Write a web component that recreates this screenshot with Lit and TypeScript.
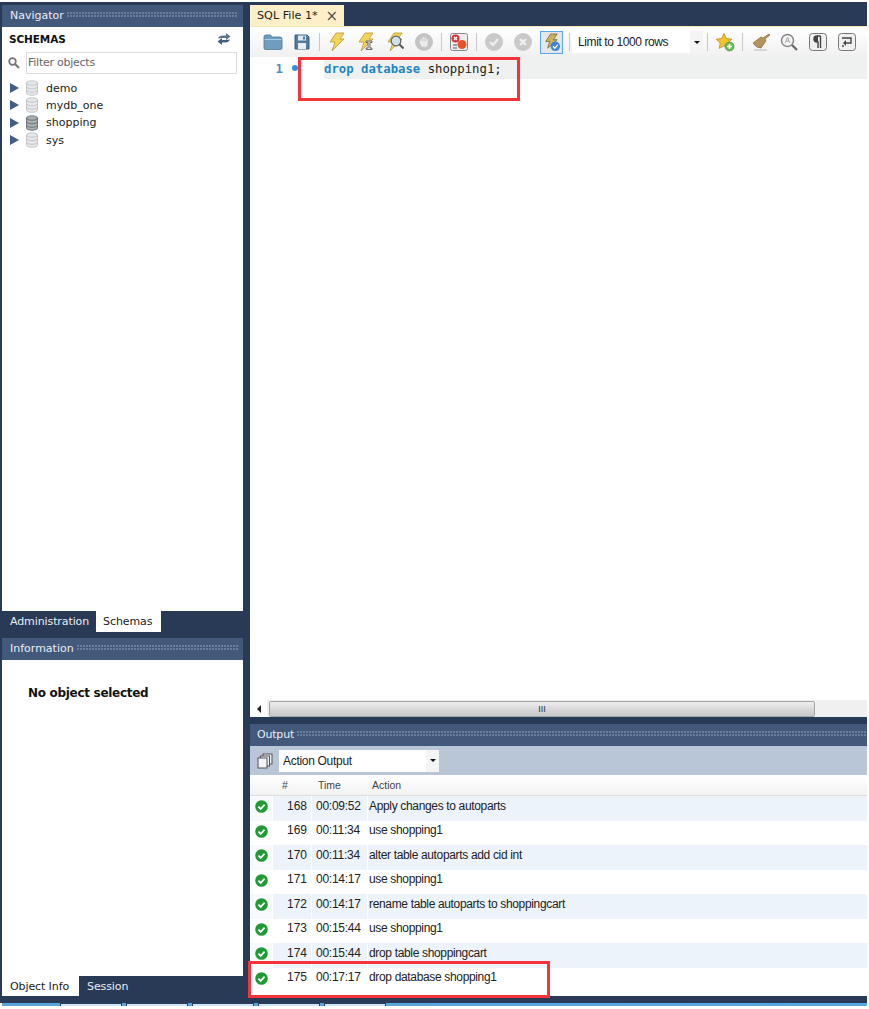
import { LitElement, html, css, svg } from "lit";
import { customElement } from "lit/decorators.js";

const rows = [
  ["168", "00:09:52", "Apply changes to autoparts"],
  ["169", "00:11:34", "use shopping1"],
  ["170", "00:11:34", "alter table autoparts add cid int"],
  ["171", "00:14:17", "use shopping1"],
  ["172", "00:14:17", "rename table autoparts to shoppingcart"],
  ["173", "00:15:44", "use shopping1"],
  ["174", "00:15:44", "drop table shoppingcart"],
  ["175", "00:17:17", "drop database shopping1"],
];
const schemas = [
  ["demo", false],
  ["mydb_one", false],
  ["shopping", true],
  ["sys", false],
] as [string, boolean][];

const icon = (body: unknown, cls = "ic") =>
  html`<svg class=${cls} viewBox="0 0 20 20" aria-hidden="true">${body}</svg>`;
const bolt = svg`<path d="M9 1h8l-4 6h4L5 19l3-9H3z" fill="#f3d35a" stroke="#b99a3a" stroke-width=".8"/>`;
const dbIcon = (dark: boolean) => {
  const f = dark ? "#a9aeb3" : "#e6e8e9";
  const s = dark ? "#5f666d" : "#b8bcbf";
  return html`<svg class="db" viewBox="0 0 14 16" aria-hidden="true">
    <path d="M1.5 3v10c0 1.3 2.5 2.3 5.5 2.3s5.500-1 5.500-2.300V3z" fill=${f} stroke=${s} stroke-width=".8"/>
    <ellipse cx="7" cy="3" rx="5.500" ry="2.200" fill=${f} stroke=${s} stroke-width=".8"/>
    <path d="M1.500 6.500c0 1.300 2.500 2.300 5.500 2.300s5.500-1 5.500-2.300M1.500 10c0 1.300 2.500 2.300 5.500 2.300s5.500-1 5.500-2.300" fill="none" stroke=${s} stroke-width=".8"/>
  </svg>`;
};

@customElement("app-root")
export class AppRoot extends LitElement {
  static styles = css`
    :host { display: block; width: 869px; height: 1009px; background: #fff; position: relative; overflow: hidden; font-family: "DejaVu Sans", sans-serif; color: #111; }
    .app { margin-top: 2px; width: 867px; height: 1001px; background: #283a56; display: grid; grid-template-columns: 241px 617px; column-gap: 7px; padding: 3px 0 0 2px; box-sizing: border-box; }
    .col { display: flex; flex-direction: column; min-height: 0; }
    .title { height: 22px; flex: none; display: flex; align-items: center; gap: 3px; padding: 0 5px 2px 8px; background: #43597c; color: #e8edf4; font-size: 11px; box-sizing: border-box; }
    .title.wide { padding-right: 0; padding-left: 7px; letter-spacing: -.2px; }
    .dots { flex: 1; height: 6px; background-image: radial-gradient(circle at 1px 1px, #6a7f9e 1px, transparent 1.200px); background-size: 3px 3px; }

    .nav { height: 584px; background: #fff; flex: none; display: flex; flex-direction: column; }
    .schemas { display: flex; justify-content: space-between; align-items: center; height: 25px; padding: 0 12px 2px 7px; box-sizing: border-box; font-size: 10.500px; font-weight: bold; color: #111; letter-spacing: -.1px; }
    .filter { display: flex; align-items: center; padding: 0 6px 0 5px; gap: 5px; height: 22px; }
    .filter-box { flex: 1; height: 22px; border: 1px solid #d9dde2; box-sizing: border-box; font-size: 11px; letter-spacing: -.25px; color: #666; display: flex; align-items: center; padding: 0 0 2px 1px; }
    .search { width: 14px; height: 14px; flex: none; }
    .tree { padding-top: 5.500px; display: flex; flex-direction: column; }
    .node { height: 17.300px; display: flex; align-items: center; font-size: 11px; color: #222; }
    .tri { width: 0; height: 0; margin-left: 8px; border-left: 9px solid #3f5f88; border-top: 5px solid transparent; border-bottom: 5px solid transparent; }
    .db { width: 14px; height: 16px; margin-left: 6px; margin-right: 7px; }

    .tabs { height: 21px; flex: none; display: flex; font-size: 11px; color: #e8edf4; }
    .tab { padding: 0 7px 0 8px; display: flex; align-items: center; box-sizing: border-box; height: 21px; letter-spacing: -.1px; }
    .tab.on { background: #fff; color: #222; padding: 0 9px 0 7px; }
    .tab.on.first { padding: 0 10px 0 8px; }
    .tabs.below { height: 20px; }
    .tabs.below .tab { height: 20px; }
    .gap6 { height: 6px; flex: none; }
    .info { height: 316px; flex: none; background: #fff; padding: 26px 0 0 26px; box-sizing: border-box; font-size: 12px; font-weight: bold; color: #111; letter-spacing: -.3px; }

    .doc-tabs { height: 21px; flex: none; display: flex; }
    .doc-tab { width: 94px; height: 21px; background: #fdf0c8; display: flex; align-items: center; justify-content: space-between; padding: 0 6px 0 7px; box-sizing: border-box; font-size: 11.200px; color: #222; }
    .close { font-size: 15px; color: #555; }
    .cream { height: 1px; background: #f4e6b8; flex: none; }
    .toolbar { height: 30px; flex: none; background: linear-gradient(#fff, #f0f0f0); display: flex; align-items: center; padding-left: 8px; box-sizing: border-box; }
    .cell { width: 29px; height: 22px; display: flex; align-items: center; justify-content: center; flex: none; }
    .cell.narrow { width: 26px; }
    .cell.m { width: 28px; }
    .ic { width: 20px; height: 20px; display: block; }
    .sep { width: 6px; height: 18px; flex: none; display: flex; justify-content: center; }
    .sep::after { content: ""; width: 1px; height: 18px; background: #c4c8cc; }
    .sep.w8 { width: 8px; }
    .sep.w9 { width: 9px; }
    .toggled { border: 1px solid #5aa6ee; background: #e4e6e8; width: 23px; height: 23px; box-sizing: border-box; display: flex; align-items: center; justify-content: center; }
    .toggled .ic { width: 19px; height: 19px; }
    .limit { width: 131px; height: 22px; background: #fff; flex: none; display: flex; justify-content: space-between; align-items: center; padding-left: 6px; box-sizing: border-box; font-family: "Liberation Sans", sans-serif; font-size: 12px; color: #222; letter-spacing: -.4px; }
    .drop { width: 13px; height: 22px; background: #f4f4f4; display: flex; align-items: center; justify-content: center; }
    .drop i { width: 0; height: 0; border-top: 3px solid #111; border-left: 3px solid transparent; border-right: 3px solid transparent; }

    .editor { height: 643px; flex: none; background: #fff; }
    .line { height: 22px; display: flex; align-items: center; font-family: "DejaVu Sans Mono", monospace; font-size: 12.300px; }
    .no { width: 33px; text-align: right; color: #4d8fc0; font-weight: bold; flex: none; padding-top: 1px; }
    .mark { width: 41px; flex: none; padding-left: 9px; box-sizing: border-box; display: flex; }
    .mark i { width: 6px; height: 6px; border-radius: 50%; background: #2f8fd8; }
    .code { flex: 1; height: 22px; padding-top: 1px; box-sizing: border-box; background: #eff0f0; display: flex; align-items: center; color: #222; white-space: pre; }
    .kw { color: #1d86c4; font-weight: bold; }

    .hscroll { height: 17px; flex: none; background: #f0f0f0; display: flex; align-items: center; }
    .sarrow { width: 17px; height: 17px; display: flex; align-items: center; justify-content: center; background: #fff; flex: none; }
    .sarrow i { border-right: 4px solid #222; border-top: 4px solid transparent; border-bottom: 4px solid transparent; }
    .thumb { margin-left: 2px; width: 546px; height: 16px; box-sizing: border-box; border: 1px solid #a5a5a5; border-radius: 2px; background: linear-gradient(#efefef, #d8d8d8 50%, #c8c8c8); display: flex; align-items: center; justify-content: center; font-size: 9px; color: #333; font-family: "Liberation Sans", sans-serif; }
    .gap8 { height: 7px; flex: none; }

    .outbar { height: 29px; flex: none; background: #b9c6d7; display: flex; align-items: center; padding-left: 7px; box-sizing: border-box; }
    .copy { width: 16px; height: 16px; flex: none; }
    .select { margin-left: 6px; width: 160px; height: 22px; background: #fff; display: flex; align-items: center; justify-content: space-between; padding-left: 4px; box-sizing: border-box; font-family: "Liberation Sans", sans-serif; font-size: 12px; letter-spacing: -.3px; color: #222; }
    .output { height: 221px; flex: none; background: #fff; font-family: "Liberation Sans", sans-serif; font-size: 12px; color: #222; display: flex; flex-direction: column; }
    .ohead, .row { display: grid; grid-template-columns: 22px 38px 55px 1fr; column-gap: 1px; }
    .ohead { height: 21px; flex: none; align-items: center; font-size: 10.500px; color: #444; background: linear-gradient(#fff, #f2f2f2); border-bottom: 1px solid #ddd; box-sizing: border-box; }
    .ohead span:nth-child(2) { padding-left: 9px; }
    .ohead span:nth-child(3) { padding-left: 6px; }
    .ohead span:nth-child(4) { padding-left: 4px; }
    .row { height: 24.500px; flex: none; align-items: stretch; }
    .row > span { display: flex; align-items: center; padding-bottom: 5px; box-sizing: border-box; }
    .row:nth-child(even) > span { background: #edf3fb; }
    .row:nth-child(even) > span:first-child { background: #f7f9fc; }
    .row span.num { justify-content: flex-end; padding-right: 4px; }
    .row span.time { padding-left: 4px; letter-spacing: -.25px; }
    .row span.act { padding-left: 1px; letter-spacing: -.34px; }
    .row span.ok { justify-content: center; padding-bottom: 3px; }
    .check { width: 13px; height: 13px; }

    .task { height: 3px; width: 865px; margin-left: 2px; background: linear-gradient(90deg, #5aa5dc, #58a8e4); display: flex; padding-left: 58px; gap: 4px; box-sizing: border-box; }
    .task i { width: 62px; height: 3px; background: #cfe6f6; border: solid #28405f; border-width: 1px 1px 0; box-sizing: border-box; }
    .hl { position: absolute; border: 3px solid #f5333a; box-sizing: border-box; pointer-events: none; }
    .hl.a { left: 298px; top: 57px; width: 222px; height: 44px; }
    .hl.b { left: 248px; top: 961px; width: 302px; height: 37px; }
  `;

  private title(t: string, wide = false) {
    return html`<div class="title ${wide ? "wide" : ""}"><span>${t}</span><span class="dots"></span></div>`;
  }

  render() {
    return html`
      <div class="app">
        <div class="col">
          ${this.title("Navigator")}
          <div class="nav">
            <div class="schemas"><span>SCHEMAS</span>
              <svg class="search" viewBox="0 0 14 14" aria-hidden="true"><path d="M1 6.500Q2 3.500 6 3.500H9V1l4.500 3.500L9 8V6H5z" fill="#5f7590"/><path d="M13 7.500Q12 10.500 8 10.500H5V13L.5 9.500 5 6v2h4z" fill="#46607f"/></svg>
            </div>
            <div class="filter">
              <svg class="search" viewBox="0 0 14 14" aria-hidden="true"><circle cx="5.500" cy="5.500" r="3.300" fill="none" stroke="#777" stroke-width="1.800"/><path d="M8 8l4 4" stroke="#777" stroke-width="2.200"/></svg>
              <div class="filter-box">Filter objects</div>
            </div>
            <div class="tree">
              ${schemas.map(([n, d]) => html`<div class="node"><i class="tri"></i>${dbIcon(d)}<span>${n}</span></div>`)}
            </div>
          </div>
          <div class="tabs"><span class="tab">Administration</span><span class="tab on">Schemas</span></div>
          <div class="gap6"></div>
          ${this.title("Information")}
          <div class="info">No object selected</div>
          <div class="tabs below"><span class="tab on first">Object Info</span><span class="tab">Session</span></div>
        </div>

        <div class="col">
          <div class="doc-tabs"><div class="doc-tab"><span>SQL File 1*</span><span class="close">×</span></div></div>
          <div class="cream"></div>
          <div class="toolbar">
            <span class="cell">${icon(svg`<path d="M1 5q0-2 2-2h4.500l1.500 2h8q2 0 2 2v9q0 1.500-1.500 1.500h-15Q1 17.500 1 16z" fill="#6f9dbd" stroke="#4c7796" stroke-width=".8"/><path d="M1.500 7.500h17" stroke="#a8cbe0" stroke-width="1"/>`)}</span>
            <span class="cell">${icon(svg`<path d="M3 3h12l2 2v12H3z" fill="#4f7c9f" stroke="#3b607e"/><rect x="6" y="3.500" width="8" height="5" fill="#dfe9f0"/><rect x="6" y="11" width="8" height="6" fill="#e9eef2"/><rect x="11" y="4.500" width="2" height="3" fill="#4f7c9f"/>`)}</span>
            <span class="sep"></span>
            <span class="cell">${icon(bolt)}</span>
            <span class="cell">${icon(svg`${bolt}<path d="M10 9h6v1.500h-2V16h2v1.500h-6V16h2v-5.500h-2z" fill="#ddd" stroke="#555" stroke-width=".8"/>`)}</span>
            <span class="cell">${icon(svg`${bolt}<circle cx="11" cy="9" r="4.800" fill="#cfe3ea" stroke="#666" stroke-width="1.300"/><path d="M14.500 12.500l4 4" stroke="#555" stroke-width="2"/>`)}</span>
            <span class="cell">${icon(svg`<circle cx="10" cy="10" r="9" fill="#c4c4c4"/><path d="M6.500 9V6.500h1.300V9h.7V5h1.300v4h.7V5.500h1.300V9.500h.7V7h1.300v5q0 3-3 3h-1.500q-2 0-3-3l-1-2.500 1-.5z" fill="#e9e9e9"/>`)}</span>
            <span class="sep"></span>
            <span class="cell">${icon(svg`<rect x="1.500" y="1.500" width="17" height="17" rx="2" fill="#eee" stroke="#888"/><circle cx="6.500" cy="6.500" r="4" fill="#d8343a"/><circle cx="13" cy="12.500" r="4.500" fill="#e8552d"/><path d="M5 5l3 3M8 5l-3 3" stroke="#fff" stroke-width="1.200"/><path d="M4 13h4M4 16h4" stroke="#555" stroke-width="1.200"/>`)}</span>
            <span class="sep"></span>
            <span class="cell">${icon(svg`<circle cx="10" cy="10" r="9" fill="#c9c9c9"/><path d="M6 10l3 3 5-6" fill="none" stroke="#efefef" stroke-width="2.200"/>`)}</span>
            <span class="cell">${icon(svg`<circle cx="10" cy="10" r="9" fill="#c9c9c9"/><path d="M7 7l6 6M13 7l-6 6" stroke="#efefef" stroke-width="2.400"/>`)}</span>
            <span class="cell"><span class="toggled">${icon(svg`<path d="M9 1h7l-4 6h4L6 16l2-7H4z" fill="#c9b25a" stroke="#6e6237" stroke-width=".8"/><circle cx="14" cy="14" r="5" fill="#3f87d6"/><path d="M11.500 14l2 2 3-3.500" fill="none" stroke="#fff" stroke-width="1.400"/>`)}</span></span>
            <span class="sep"></span>
            <div class="limit"><span>Limit to 1000 rows</span><span class="drop"><i></i></span></div>
            <span class="sep w9"></span>
            <span class="cell narrow">${icon(svg`<path d="M9 1.500l2.400 5 5.400.7-4 3.800 1 5.400L9 13.800 4.200 16.400l1-5.400-4-3.800 5.400-.7z" fill="#f2c230" stroke="#b98c1e" stroke-width=".8"/><circle cx="14.500" cy="14.500" r="4.500" fill="#6cba5a" stroke="#3d8a3a" stroke-width=".6"/><path d="M14.500 12v5M12 14.500h5" stroke="#fff" stroke-width="1.600"/>`)}</span>
            <span class="sep w8"></span>
            <span class="cell">${icon(svg`<path d="M18 2l-6 4-2-1-8 6q3 5 8 5l5-7-1-2 5-4z" fill="#b4935c" stroke="#8a6c3d" stroke-width=".7"/><path d="M3 18h13" stroke="#ccc" stroke-width="1.500"/>`)}</span>
            <span class="cell m">${icon(svg`<circle cx="8.500" cy="8.500" r="6" fill="#f5f5f5" stroke="#888" stroke-width="1.500"/><path d="M13 13l5 5" stroke="#666" stroke-width="2.200"/><path d="M6.300 11l2.200-6 2.200 6M7 9h3" fill="none" stroke="#aaa" stroke-width="1"/>`)}</span>
            <span class="cell">${icon(svg`<rect x="1.500" y="1.500" width="17" height="17" rx="3" fill="#f0f0f0" stroke="#777"/><path d="M12.500 4H9a3 3 0 0 0 0 6h1v6M12.500 4v12" fill="none" stroke="#444" stroke-width="1.400"/><path d="M9 4a3 3 0 0 0 0 6h1V4z" fill="#444"/>`)}</span>
            <span class="cell">${icon(svg`<rect x="1.500" y="1.500" width="17" height="17" rx="3" fill="#f0f0f0" stroke="#777"/><path d="M5 6h9v5H7" fill="none" stroke="#444" stroke-width="1.400"/><path d="M9 8l-3 3 3 3z" fill="#444"/><path d="M5 14h2" stroke="#444" stroke-width="1.400"/>`)}</span>
          </div>
          <div class="editor">
            <div class="line"><span class="no">1</span><span class="mark"><i></i></span><span class="code"><span class="kw">drop database</span> shopping1;</span></div>
          </div>
          <div class="hscroll"><span class="sarrow"><i></i></span><div class="thumb">III</div></div>
          <div class="gap8"></div>
          ${this.title("Output", true)}
          <div class="outbar">
            <svg class="copy" viewBox="0 0 16 16" aria-hidden="true"><rect x="6" y="1" width="9" height="10" fill="#e8edf3" stroke="#555"/><rect x="3.500" y="3" width="9" height="10" fill="#e8edf3" stroke="#555"/><rect x="1" y="5" width="9" height="10" fill="#f2f4f7" stroke="#555"/></svg>
            <div class="select"><span>Action Output</span><span class="drop"><i></i></span></div>
          </div>
          <div class="output">
            <div class="ohead"><span></span><span>#</span><span>Time</span><span>Action</span></div>
            ${rows.map(([n, t, a]) => html`<div class="row">
              <span class="ok"><svg class="check" viewBox="0 0 13 13" aria-hidden="true"><circle cx="6.500" cy="6.500" r="6.300" fill="#1f9a35"/><path d="M3.400 6.600l2.300 2.300 3.900-4.300" fill="none" stroke="#fff" stroke-width="1.700"/></svg></span>
              <span class="num">${n}</span><span class="time">${t}</span><span class="act">${a}</span>
            </div>`)}
          </div>
        </div>
      </div>
      <div class="task"><i></i><i></i><i></i><i></i><i></i></div>
      <div class="hl a"></div>
      <div class="hl b"></div>
    `;
  }
}
